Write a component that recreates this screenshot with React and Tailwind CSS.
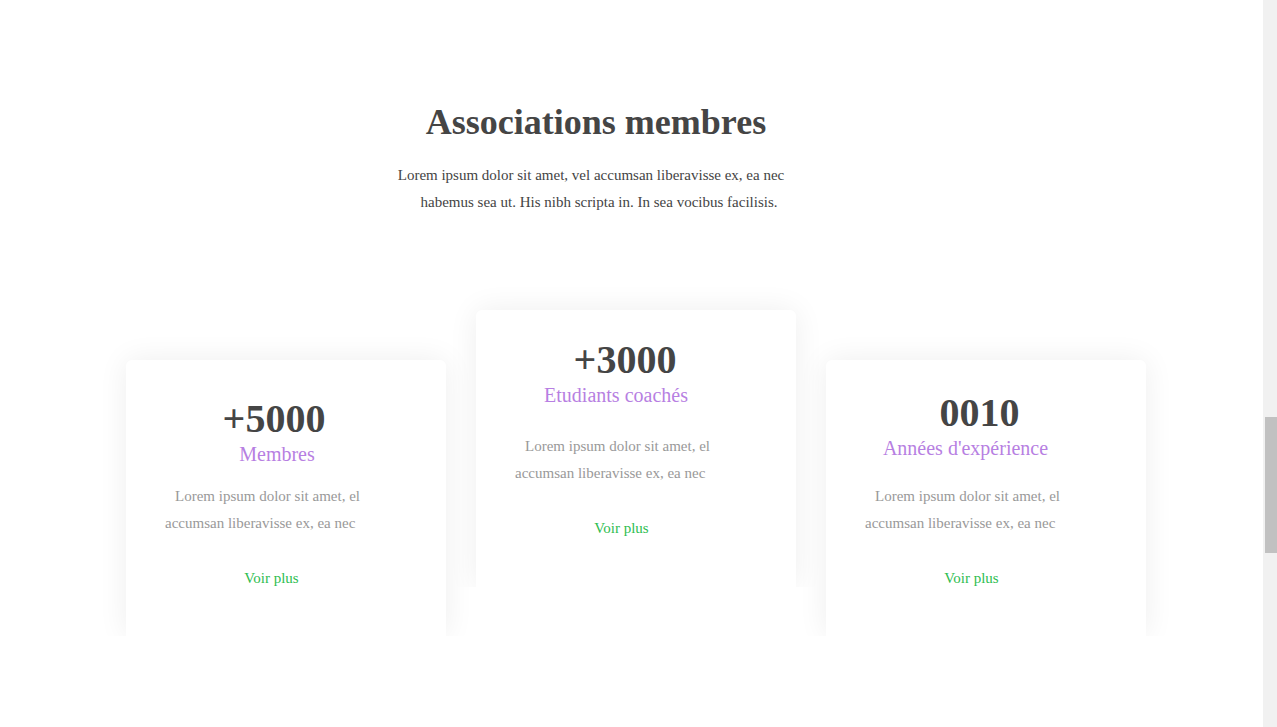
const stats = [
	{ value: '+5000', label: 'Membres', pt: 'pt-[39px]', mt: 'mt-[50px]', h: 'h-[276px]', np: 'pl-[2px]', lp: 'pl-[8px]' },
	{ value: '+3000', label: 'Etudiants coachés', pt: 'pt-[30px]', mt: 'mt-0', h: 'h-[277px]', np: 'pl-[4px]', lp: 'pr-[14px]' },
	{ value: '0010', label: "Années d'expérience", pt: 'pt-[33px]', mt: 'mt-[50px]', h: 'h-[276px]', np: 'pl-[13px]', lp: 'pr-[15px]' },
];

function StatCard({ value, label, pt, mt, h, np, lp }) {
	return (
		<div
			className={`${mt} ${h} w-[320px] shrink-0 rounded-t-md bg-white pl-[39px] pr-[65px] shadow-[0_0_30px_rgba(0,0,0,0.07)]`}>
			<div className={`h-[123px] ${pt} text-center`}>
				<h3 className={`${np} text-[40px] font-bold leading-[40px] text-[#454545]`}>{value}</h3>
				<p className={`${lp} mt-[5px] text-[20px] leading-[20px] text-[#b77fe2]`}>{label}</p>
			</div>
			<p className="text-[15px] leading-[27px] text-[#999]">
				<span className="pl-[10px]">Lorem ipsum dolor sit amet, el</span>
				<br />
				accumsan liberavisse ex, ea nec
			</p>
			<div className="mt-[28px] pr-[3px] text-center">
				<a href="#" className="text-[15px] leading-[27px] text-[#2dbd50]">
					Voir plus
				</a>
			</div>
		</div>
	);
}

export default function App() {
	return (
		<div className="flex h-[727px] w-full bg-white font-['Liberation_Serif','Times_New_Roman',serif]">
			<main className="flex-1">
				{/* intro */}
				<section className="pt-[104px]">
					<div className="ml-[386px] w-[410px] text-center">
						<h2 className="pl-[10px] text-[36px] font-bold leading-[36px] text-[#454545]">
							Associations membres
						</h2>
						<p className="mt-[22px] text-[15px] leading-[27px] text-[#444]">
							Lorem ipsum dolor sit amet, vel accumsan liberavisse ex, ea nec
							<br />
							<span className="pl-[16px]">habemus sea ut. His nibh scripta in. In sea vocibus facilisis.</span>
						</p>
					</div>
				</section>

				{/* cards */}
				<section className="mt-[64px] h-[356px] overflow-hidden pt-[30px]">
					<div className="flex items-start justify-center pl-[9px]">
						<StatCard {...stats[0]} />
						{/* middle card: its shadow is cut at its bottom edge */}
						<div className="-mt-[30px] shrink-0 overflow-hidden px-[30px] pt-[30px]">
							<StatCard {...stats[1]} />
						</div>
						<StatCard {...stats[2]} />
					</div>
				</section>
			</main>

			{/* scrollbar */}
			<div className="w-[14px] bg-[#f1f1f1] pl-[2px]">
				<div className="mt-[417px] h-[136px] w-full bg-[#c1c1c1]" />
			</div>
		</div>
	);
}
